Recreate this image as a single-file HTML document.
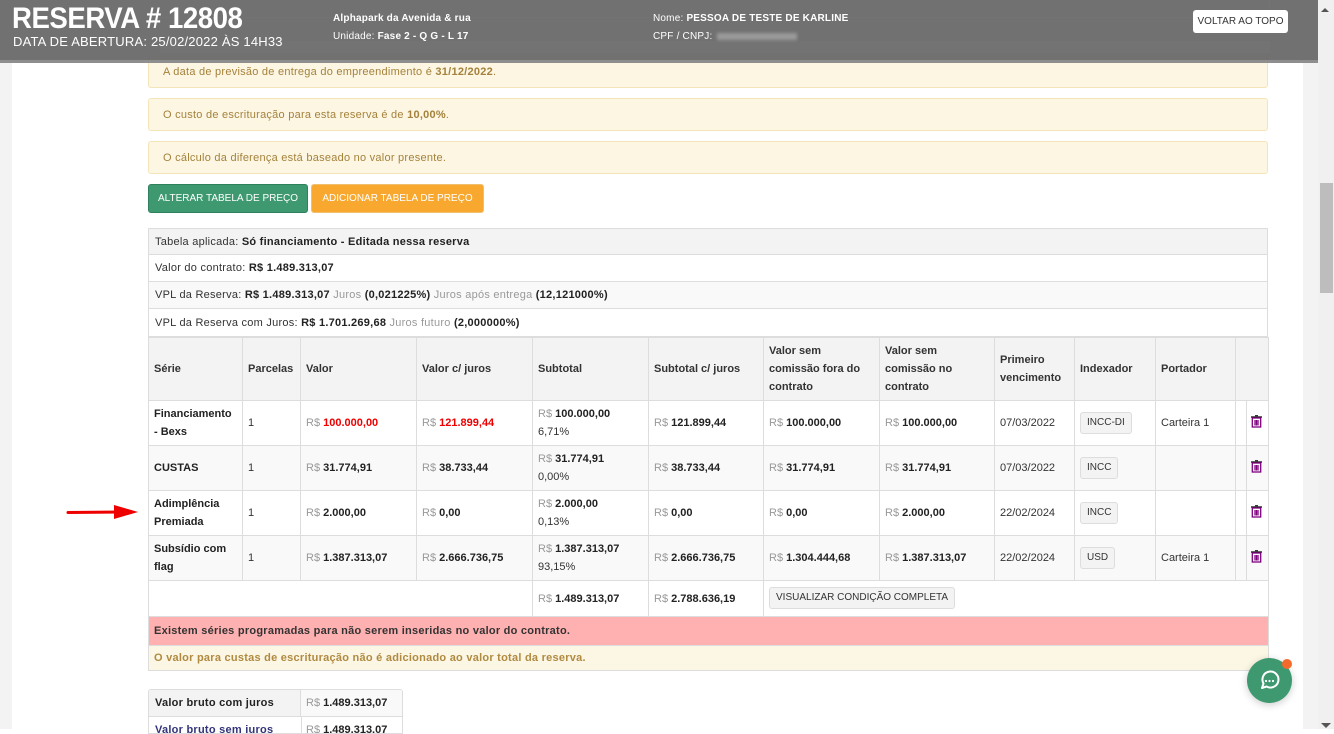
<!DOCTYPE html>
<html><head><meta charset="utf-8">
<style>
*{box-sizing:border-box;margin:0;padding:0}
body{width:1334px;height:729px;overflow:hidden;background:#fff;font-family:"Liberation Sans",sans-serif;font-size:11px;color:#333;position:relative}
.abs{position:absolute}
.gutL{left:0;top:0;width:12px;height:729px;background:#f3f3f3}
.gutR{left:1303px;top:0;width:15px;height:729px;background:#f3f3f3}
.sb{left:1318px;top:0;width:16px;height:729px;background:#f0f0f0}
.thumb{left:1320px;top:183px;width:13px;height:110px;background:#bdbdbd}
.alert{left:148px;width:1120px;background:#fdf6e3;border:1px solid #f3e5b8;border-radius:3px;color:#a4823b;padding-left:14px;display:flex;align-items:center;letter-spacing:.25px}
.btn{top:184px;height:29px;border-radius:3px;color:#fff;font-size:10px;display:flex;align-items:center;justify-content:center}
.info{left:148px;width:1120px;border:1px solid #ddd;border-top:none;display:flex;align-items:center;padding-left:6px;letter-spacing:.25px}
.mut{color:#999}
table{border-collapse:collapse;position:absolute;left:148px;top:337px;width:1120px;table-layout:fixed}
td,th{border:1px solid #ddd;padding:0 5px;font-size:11px;text-align:left;vertical-align:middle;line-height:18px}
th{background:#f3f3f3;font-weight:bold;height:63px}
tr.r td{height:45px}
tr.alt td{background:#f9f9f9}
b{font-weight:bold;color:#222}
.red{color:#e00}
.tag{display:inline-block;border:1px solid #ddd;background:#f3f3f3;border-radius:3px;padding:2px 6px;font-size:10px;line-height:16px;margin-top:-8px}
.hdr{left:0;top:0;width:1318px;height:63px;background:rgba(105,105,105,.95);border-bottom:3px solid #8e8e8e}
</style></head><body>
<div class="abs gutL"></div><div class="abs gutR"></div><div class="abs sb"></div><div class="abs thumb"></div>
<div class="abs" style="left:1321px;top:723px;width:0;height:0;border-left:5px solid transparent;border-right:5px solid transparent;border-top:5px solid #555"></div>

<div class="abs alert" style="top:56px;height:32px">A data de previsão de entrega do empreendimento é&nbsp;<b style="color:#a4823b">31/12/2022</b>.</div>
<div class="abs alert" style="top:98px;height:33px">O custo de escrituração para esta reserva é de&nbsp;<b style="color:#a4823b">10,00%</b>.</div>
<div class="abs alert" style="top:141px;height:33px">O cálculo da diferença está baseado no valor presente.</div>

<div class="abs btn" style="left:148px;width:160px;background:#3f9970;border:1px solid #2f805c">ALTERAR TABELA DE PREÇO</div>
<div class="abs btn" style="left:311px;width:173px;background:#f8a82f;border:1px solid #f0c070">ADICIONAR TABELA DE PREÇO</div>

<div class="abs info" style="top:228px;height:27px;background:#f3f3f3;border-top:1px solid #ddd">Tabela aplicada:&nbsp;<b>Só financiamento - Editada nessa reserva</b></div>
<div class="abs info" style="top:255px;height:27px">Valor do contrato:&nbsp;<b>R$ 1.489.313,07</b></div>
<div class="abs info" style="top:282px;height:27px;background:#f9f9f9">VPL da Reserva:&nbsp;<b>R$ 1.489.313,07</b>&nbsp;<span class="mut">Juros</span>&nbsp;<b>(0,021225%)</b>&nbsp;<span class="mut">Juros após entrega</span>&nbsp;<b>(12,121000%)</b></div>
<div class="abs info" style="top:309px;height:28px">VPL da Reserva com Juros:&nbsp;<b>R$ 1.701.269,68</b>&nbsp;<span class="mut">Juros futuro</span>&nbsp;<b>(2,000000%)</b></div>

<table>
<colgroup><col style="width:94px"><col style="width:58px"><col style="width:116px"><col style="width:116px"><col style="width:116px"><col style="width:115px"><col style="width:116px"><col style="width:115px"><col style="width:80px"><col style="width:81px"><col style="width:80px"><col style="width:11px"><col style="width:22px"></colgroup>
<tr><th>Série</th><th>Parcelas</th><th>Valor</th><th>Valor c/ juros</th><th>Subtotal</th><th>Subtotal c/ juros</th><th>Valor sem comissão fora do contrato</th><th>Valor sem comissão no contrato</th><th>Primeiro vencimento</th><th>Indexador</th><th>Portador</th><th colspan="2"></th></tr>
<tr class="r"><td><b>Financiamento - Bexs</b></td><td>1</td><td><span class="mut">R$</span> <b class="red">100.000,00</b></td><td><span class="mut">R$</span> <b class="red">121.899,44</b></td><td><span class="mut">R$</span> <b>100.000,00</b><br>6,71%</td><td><span class="mut">R$</span> <b>121.899,44</b></td><td><span class="mut">R$</span> <b>100.000,00</b></td><td><span class="mut">R$</span> <b>100.000,00</b></td><td>07/03/2022</td><td><span class="tag">INCC-DI</span></td><td>Carteira 1</td><td></td><td></td></tr>
<tr class="r alt"><td><b>CUSTAS</b></td><td>1</td><td><span class="mut">R$</span> <b>31.774,91</b></td><td><span class="mut">R$</span> <b>38.733,44</b></td><td><span class="mut">R$</span> <b>31.774,91</b><br>0,00%</td><td><span class="mut">R$</span> <b>38.733,44</b></td><td><span class="mut">R$</span> <b>31.774,91</b></td><td><span class="mut">R$</span> <b>31.774,91</b></td><td>07/03/2022</td><td><span class="tag">INCC</span></td><td></td><td></td><td></td></tr>
<tr class="r"><td><b>Adimplência Premiada</b></td><td>1</td><td><span class="mut">R$</span> <b>2.000,00</b></td><td><span class="mut">R$</span> <b>0,00</b></td><td><span class="mut">R$</span> <b>2.000,00</b><br>0,13%</td><td><span class="mut">R$</span> <b>0,00</b></td><td><span class="mut">R$</span> <b>0,00</b></td><td><span class="mut">R$</span> <b>2.000,00</b></td><td>22/02/2024</td><td><span class="tag">INCC</span></td><td></td><td></td><td></td></tr>
<tr class="r alt"><td><b>Subsídio com flag</b></td><td>1</td><td><span class="mut">R$</span> <b>1.387.313,07</b></td><td><span class="mut">R$</span> <b>2.666.736,75</b></td><td><span class="mut">R$</span> <b>1.387.313,07</b><br>93,15%</td><td><span class="mut">R$</span> <b>2.666.736,75</b></td><td><span class="mut">R$</span> <b>1.304.444,68</b></td><td><span class="mut">R$</span> <b>1.387.313,07</b></td><td>22/02/2024</td><td><span class="tag">USD</span></td><td>Carteira 1</td><td></td><td></td></tr>
<tr><td colspan="4" style="height:36px;border-right:1px solid #ddd"></td><td><span class="mut">R$</span> <b>1.489.313,07</b></td><td><span class="mut">R$</span> <b>2.788.636,19</b></td><td colspan="7"><span class="tag" style="margin-top:-6px;font-size:10px">VISUALIZAR CONDIÇÃO COMPLETA</span></td></tr>
<tr><td colspan="13" style="height:29px;background:#ffb0b0;color:#333;letter-spacing:.25px"><b style="color:#333">Existem séries programadas para não serem inseridas no valor do contrato.</b></td></tr>
<tr><td colspan="13" style="height:25px;background:#fcf6e4;color:#b08a40;letter-spacing:.25px"><b style="color:#b08a40">O valor para custas de escrituração não é adicionado ao valor total da reserva.</b></td></tr>
</table>

<svg class="abs" style="left:1250px;top:415px" width="14" height="150">
 <g id="t" fill="none" stroke="#800080" stroke-width="1.3">
  <line x1="1" y1="2" x2="12" y2="2" stroke="#222" stroke-width="1.4"/>
  <line x1="5" y1="0.7" x2="8" y2="0.7" stroke="#222" stroke-width="1.2"/>
  <rect x="2.3" y="3" width="8.4" height="9" />
  <line x1="5" y1="5" x2="5" y2="10.5"/><line x1="6.5" y1="5" x2="6.5" y2="10.5"/><line x1="8" y1="5" x2="8" y2="10.5"/>
 </g>
 <use href="#t" y="45"/><use href="#t" y="90"/><use href="#t" y="135"/>
</svg>

<!-- bottom summary table -->
<div class="abs" style="left:148px;top:689px;width:255px;height:45px;border:1px solid #ddd;border-radius:3px 3px 0 0;overflow:hidden">
 <div class="abs" style="left:0;top:0;width:152px;height:27px;background:#f3f3f3;border-right:1px solid #ddd;border-bottom:1px solid #ddd"></div>
 <div class="abs" style="left:152px;top:0;width:102px;height:27px;background:#f9f9f9;border-bottom:1px solid #ddd"></div>
 <div class="abs" style="left:152px;top:27px;width:1px;height:20px;background:#ddd"></div>
 <div class="abs" style="left:6px;top:7px;letter-spacing:.25px"><b>Valor bruto com juros</b></div>
 <div class="abs" style="left:157px;top:7px"><span class="mut">R$</span> <b>1.489.313,07</b></div>
 <div class="abs" style="left:6px;top:34px;letter-spacing:.25px"><b style="color:#33337a">Valor bruto sem juros</b></div>
 <div class="abs" style="left:157px;top:34px"><span class="mut">R$</span> <b>1.489.313,07</b></div>
</div>

<svg class="abs" style="left:66px;top:504px" width="74" height="16"><line x1="2" y1="8.5" x2="56" y2="8" stroke="#e00" stroke-width="3" stroke-linecap="round"/><polygon points="48,1 72,8 48,15" fill="#e00"/></svg>

<div class="abs" style="left:1247px;top:658px;width:45px;height:45px;border-radius:50%;background:#3f9970;box-shadow:0 2px 8px rgba(0,0,0,.2)">
 <svg width="45" height="45" style="position:absolute;left:0;top:0"><path d="M15 30 L16.5 25.5 A8 8 0 1 1 19.5 28.5 Z" fill="none" stroke="#fff" stroke-width="2" stroke-linejoin="round"/><circle cx="19" cy="23" r="1.1" fill="#fff"/><circle cx="22.5" cy="23" r="1.1" fill="#fff"/><circle cx="26" cy="23" r="1.1" fill="#fff"/></svg>
 <div class="abs" style="left:35px;top:1px;width:10px;height:10px;border-radius:50%;background:#f56a2b"></div>
</div>

<div class="abs hdr"></div>
<div class="abs" style="left:150px;top:0;width:1120px;height:18px;border:1px solid #777;border-top:none;opacity:.35"></div>
<div class="abs" style="left:160px;top:41px;width:1110px;height:12px;background:#737373"></div>
<div class="abs" style="left:12px;top:2px;font-family:'Liberation Sans Narrow','Liberation Sans',sans-serif;font-weight:bold;font-size:30px;color:#fff;letter-spacing:-0.5px;transform:scaleX(.92);transform-origin:left">RESERVA # 12808</div>
<div class="abs" style="left:13px;top:34px;font-size:13px;color:#fff;letter-spacing:.2px">DATA DE ABERTURA: 25/02/2022 ÀS 14H33</div>
<div class="abs" style="left:333px;top:13px;font-size:10px;color:#fff;font-weight:bold;letter-spacing:.2px">Alphapark da Avenida &amp; rua</div>
<div class="abs" style="left:333px;top:31px;font-size:10px;color:#fff;letter-spacing:.2px">Unidade: <b style="color:#fff">Fase 2 - Q G - L 17</b></div>
<div class="abs" style="left:653px;top:13px;font-size:10px;color:#fff;letter-spacing:.2px">Nome: <b style="color:#fff">PESSOA DE TESTE DE KARLINE</b></div>
<div class="abs" style="left:653px;top:31px;font-size:10px;color:#fff;letter-spacing:.2px">CPF / CNPJ:</div>
<div class="abs" style="left:717px;top:33px;width:80px;height:7px;background:#9a9a9a;filter:blur(1.5px)"></div>
<div class="abs" style="left:1193px;top:10px;width:95px;height:23px;background:#fff;border-radius:3px;font-size:10px;color:#333;display:flex;align-items:center;justify-content:center">VOLTAR AO TOPO</div>
<div class="abs" style="left:1321px;top:8px;width:0;height:0;border-left:4px solid transparent;border-right:4px solid transparent;border-bottom:4px solid #555"></div>
</body></html>
